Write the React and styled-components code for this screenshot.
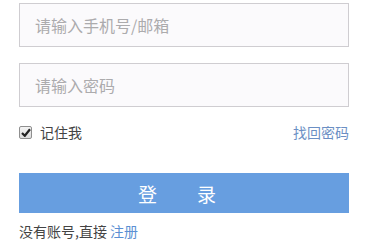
import React, { useState } from "react";
import styled, { createGlobalStyle } from "styled-components";

const Global = createGlobalStyle`
  body {
    margin: 0;
    background: #fff;
    font-family: "Microsoft YaHei", "Noto Sans CJK SC", "Noto Sans", sans-serif;
  }
`;

const Form = styled.form`
  width: 330px;
  margin: 3px 0 0 19px;
  display: flex;
  flex-direction: column;
`;

const Input = styled.input`
  box-sizing: border-box;
  width: 100%;
  height: 44px;
  margin-bottom: ${(p) => p.$gap || 0}px;
  padding: 0 15px;
  border: 1px solid #cfcdd1;
  background: #fbfafc;
  font-family: inherit;
  font-size: 16px;
  color: #333;
  outline: none;

  &::placeholder {
    color: #acabad;
  }
`;

const Row = styled.div`
  height: 20px;
  margin-top: 15px;
  display: flex;
  align-items: center;
  justify-content: space-between;
  font-size: 14px;
`;

const Remember = styled.label`
  display: flex;
  align-items: center;
  gap: 8px;
  color: #444;
  cursor: pointer;
`;

const Box = styled.span`
  box-sizing: border-box;
  width: 13px;
  height: 13px;
  border: 1px solid #8f8f8f;
  border-radius: 2px;
  background: linear-gradient(#f4f4f4, #dcdcdc);
  display: flex;
  align-items: center;
  justify-content: center;
`;

const Link = styled.a`
  color: ${(p) => p.$color || "#6b8fc4"};
  text-decoration: none;
  cursor: pointer;
`;

const Button = styled.button`
  margin-top: 31px;
  height: 40px;
  border: none;
  background: #679ee0;
  color: #fff;
  font-family: inherit;
  font-size: 19px;
  display: flex;
  align-items: center;
  justify-content: center;
  gap: 40px;
  padding: 0 14px 0 0;
  cursor: pointer;
`;

const Footer = styled.div`
  margin-top: 8px;
  font-size: 14px;
  color: #444;
`;

export default function App() {
  const [remember, setRemember] = useState(true);

  return (
    <>
      <Global />
      <Form onSubmit={(e) => e.preventDefault()}>
        <Input $gap={16} placeholder="请输入手机号/邮箱" />
        <Input type="password" placeholder="请输入密码" />
        <Row>
          <Remember onClick={() => setRemember(!remember)}>
            <Box>
              {remember && (
                <svg width="10" height="9" viewBox="0 0 10 9">
                  <path d="M1 5 L3.8 7.8 L9 1.2" fill="none" stroke="#222" strokeWidth="2.2" />
                </svg>
              )}
            </Box>
            记住我
          </Remember>
          <Link>找回密码</Link>
        </Row>
        <Button type="submit">
          <span>登</span>
          <span>录</span>
        </Button>
        <Footer>
          没有账号,直接 <Link $color="#5b8fd3">注册</Link>
        </Footer>
      </Form>
    </>
  );
}
